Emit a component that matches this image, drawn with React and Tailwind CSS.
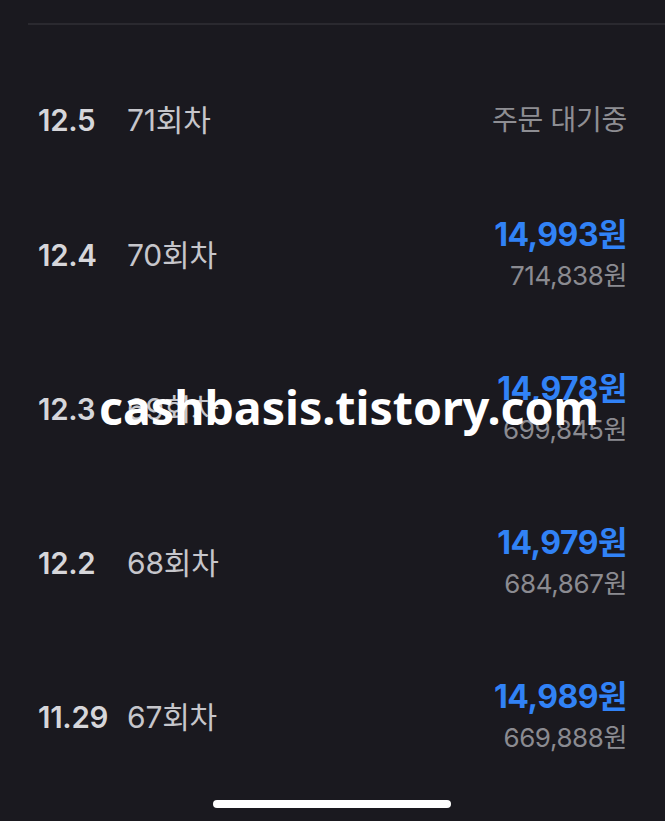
import React from 'react';

const rows = [
    { date: '12.4', round: '70회차', amount: '14,993원', total: '714,838원' },
    { date: '12.3', round: '69회차', amount: '14,978원', total: '699,845원' },
    { date: '12.2', round: '68회차', amount: '14,979원', total: '684,867원' },
    { date: '11.29', round: '67회차', amount: '14,989원', total: '669,888원' },
];

const font = { fontFamily: 'Inter, "Noto Sans CJK KR", sans-serif' };

const DateCell = ({ date, round }) => (
    <div className="flex items-center">
        <span className="w-[89px] text-[29.5px] font-semibold text-[#d6d6da] tracking-[-0.3px]">{date}</span>
        <span className="text-[30px] text-[#c6c6cb] tracking-[-0.2px]">{round}</span>
    </div>
);

const App = () => {
    return (
        <div className="relative w-[665px] h-[821px] bg-[#1a191f] overflow-hidden" style={font}>
            <div className="pt-[23px] pl-[28px]">
                <div className="h-[2px] bg-[#2a292f]" />
            </div>

            <div className="px-[38px]">
                {/* pending row */}
                <div className="h-[153px] flex items-center justify-between pt-[37px]">
                    <DateCell date="12.5" round="71회차" />
                    <span className="text-[28px] text-[#8e8e93] tracking-[-0.3px]">주문 대기중</span>
                </div>

                {rows.map((r) => (
                    <div key={r.date} className="h-[154px] flex items-center justify-between">
                        <DateCell date={r.date} round={r.round} />
                        <div className="flex flex-col items-end pt-[2px]">
                            <span className="text-[32px] leading-[40px] font-bold text-[#3182f6] tracking-[-0.5px]">{r.amount}</span>
                            <span className="text-[26px] leading-[42px] text-[#8b8b91] tracking-[-0.4px]">{r.total}</span>
                        </div>
                    </div>
                ))}
            </div>

            {/* watermark */}
            <div className="absolute left-[99px] top-[376px]">
                <span
                    className="text-[46.5px] leading-[62px] font-bold text-white whitespace-nowrap"
                    style={{ fontFamily: '"Noto Sans", sans-serif' }}
                >
                    cashbasis.tistory.com
                </span>
            </div>

            {/* home indicator */}
            <div className="absolute left-[213px] top-[800px] w-[238px] h-[8px] rounded-full bg-white" />
        </div>
    );
};

export default App;
